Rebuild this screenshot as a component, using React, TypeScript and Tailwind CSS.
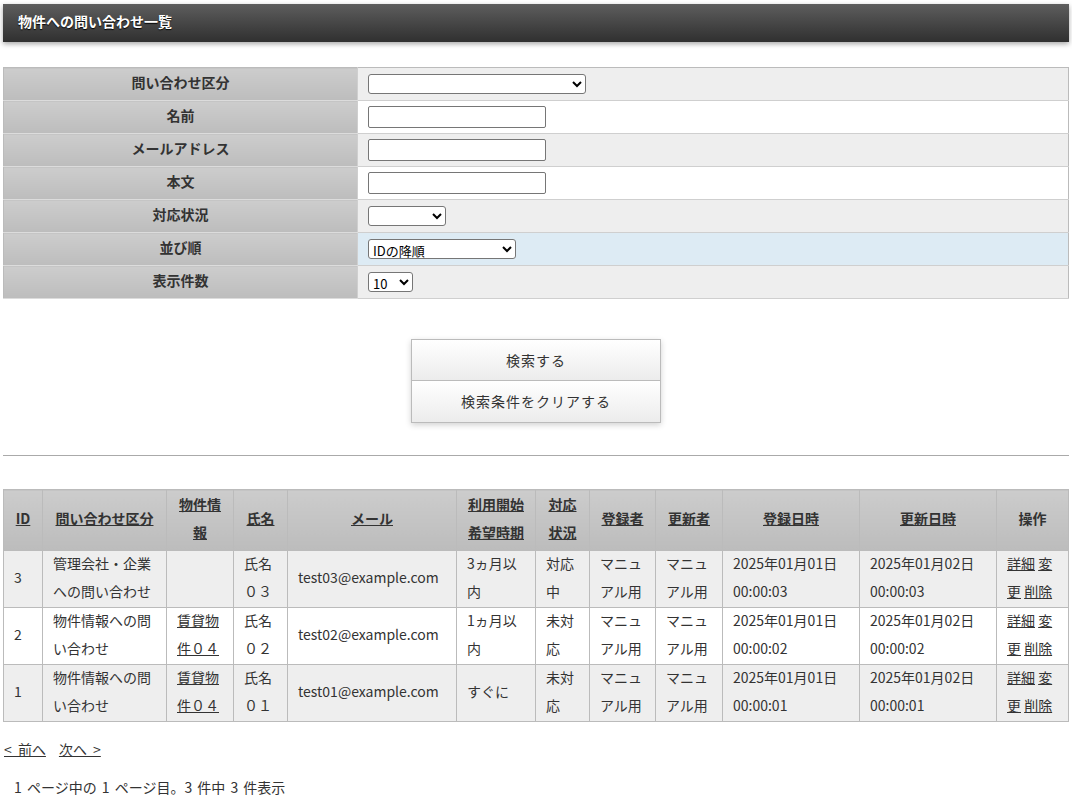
import React from "react";

const rows = [
  {
    id: "3",
    kind: "管理会社・企業への問い合わせ",
    prop: "",
    name: "氏名０３",
    mail: "test03@example.com",
    start: "3ヵ月以内",
    status: "対応中",
    created: "00:00:03",
    updated: "00:00:03",
  },
  {
    id: "2",
    kind: "物件情報への問い合わせ",
    prop: "賃貸物件０４",
    name: "氏名０２",
    mail: "test02@example.com",
    start: "1ヵ月以内",
    status: "未対応",
    created: "00:00:02",
    updated: "00:00:02",
  },
  {
    id: "1",
    kind: "物件情報への問い合わせ",
    prop: "賃貸物件０４",
    name: "氏名０１",
    mail: "test01@example.com",
    start: "すぐに",
    status: "未対応",
    created: "00:00:01",
    updated: "00:00:01",
  },
];

const labelCls =
  "w-[354px] h-[33px] pt-0 pb-[4px] bg-linear-to-b from-[#cdcdcd] to-[#bdbdbd] text-center font-bold border-b border-[#dcdcdc]";
const valueCls = "h-[33px] py-0 pl-[10px] border-b border-l border-[#cfcfcf]";
const inputCls = "block w-[178px] h-[22px] border border-[#767676] rounded-[2px] bg-white px-1";
const selectCls = "block h-[20px] border border-[#767676] rounded-[3px] bg-white text-[13px] text-black leading-none";

function FormRow({ label, bg, children }: { label: string; bg: string; children: React.ReactNode }) {
  return (
    <tr>
      <th className={labelCls}>{label}</th>
      <td className={`${valueCls} ${bg}`}>{children}</td>
    </tr>
  );
}

const thCls =
  "border border-[#bbb] bg-linear-to-b from-[#cccccc] to-[#bcbcbc] px-[10px] py-[2px] font-bold text-center leading-[28px]";
const tdCls = "border border-[#bbb] px-[10px] py-0 leading-[28px] align-middle";

// text sits a bit high in the original font, nudge it up by 2px
function Lift({ children }: { children: React.ReactNode }) {
  return <div className="-mt-[2px] mb-[2px]">{children}</div>;
}

export default function App() {
  return (
    <div className="min-h-screen bg-white px-[3px] pt-[4px] pb-4 text-[14px] text-[#333] font-['Noto_Sans_CJK_JP',sans-serif]">
      <h1 className="h-[38px] flex items-center px-[15px] pb-[4px] bg-linear-to-b from-[#5e5e5e] to-[#303030] text-white font-bold text-[14px] shadow-[0_2px_5px_rgba(0,0,0,0.35)] [text-shadow:0_1px_1px_#000]">
        物件への問い合わせ一覧
      </h1>

      <table className="mt-[25px] w-full border-collapse border border-[#bbb]">
        <tbody>
          <FormRow label="問い合わせ区分" bg="bg-[#eeeeee]">
            <select className={`${selectCls} w-[218px]`}>
              <option></option>
            </select>
          </FormRow>
          <FormRow label="名前" bg="bg-white">
            <input className={inputCls} />
          </FormRow>
          <FormRow label="メールアドレス" bg="bg-[#eeeeee]">
            <input className={inputCls} />
          </FormRow>
          <FormRow label="本文" bg="bg-white">
            <input className={inputCls} />
          </FormRow>
          <FormRow label="対応状況" bg="bg-[#eeeeee]">
            <select className={`${selectCls} w-[78px]`}>
              <option></option>
            </select>
          </FormRow>
          <FormRow label="並び順" bg="bg-[#ddebf4]">
            <select className={`${selectCls} w-[148px]`}>
              <option>IDの降順</option>
            </select>
          </FormRow>
          <FormRow label="表示件数" bg="bg-[#eeeeee]">
            <select className={`${selectCls} w-[45px]`}>
              <option>10</option>
            </select>
          </FormRow>
        </tbody>
      </table>

      <div className="mt-[40px] flex justify-center">
        <div className="w-[250px] border border-[#bbb] shadow-[0_2px_6px_rgba(0,0,0,0.18)]">
          <button className="block w-full h-[41px] border-b border-[#bbb] bg-linear-to-b from-white to-[#ececec] tracking-[1px] text-[#333]">
            検索する
          </button>
          <button className="block w-full h-[41px] bg-linear-to-b from-white to-[#ececec] tracking-[1px] text-[#333]">
            検索条件をクリアする
          </button>
        </div>
      </div>

      <hr className="mt-[32px] border-0 border-t border-[#aaa]" />

      <table className="mt-[33px] w-full table-fixed border-collapse border border-[#bbb]">
        <colgroup>
          <col className="w-[39px]" />
          <col className="w-[124px]" />
          <col className="w-[67px]" />
          <col className="w-[54px]" />
          <col className="w-[169px]" />
          <col className="w-[79px]" />
          <col className="w-[54px]" />
          <col className="w-[66px]" />
          <col className="w-[67px]" />
          <col className="w-[137px]" />
          <col className="w-[137px]" />
          <col className="w-[72px]" />
        </colgroup>
        <thead>
          <tr>
            {["ID", "問い合わせ区分", "物件情報", "氏名", "メール", "利用開始希望時期", "対応状況", "登録者", "更新者", "登録日時", "更新日時"].map(
              (h) => (
                <th key={h} className={thCls}>
                  <Lift>
                    <a href="#" className="underline">
                      {h}
                    </a>
                  </Lift>
                </th>
              )
            )}
            <th className={thCls}>
              <Lift>操作</Lift>
            </th>
          </tr>
        </thead>
        <tbody>
          {rows.map((r, i) => (
            <tr key={r.id} className={i % 2 === 1 ? "bg-white" : "bg-[#eeeeee]"}>
              <td className={tdCls}><Lift>{r.id}</Lift></td>
              <td className={tdCls}><Lift>{r.kind}</Lift></td>
              <td className={tdCls}>
                <Lift>
                  {r.prop && (
                    <a href="#" className="underline">
                      {r.prop}
                    </a>
                  )}
                </Lift>
              </td>
              <td className={tdCls}><Lift>{r.name}</Lift></td>
              <td className={tdCls}><Lift>{r.mail}</Lift></td>
              <td className={tdCls}><Lift>{r.start}</Lift></td>
              <td className={tdCls}><Lift>{r.status}</Lift></td>
              <td className={tdCls}><Lift>マニュアル用</Lift></td>
              <td className={tdCls}><Lift>マニュアル用</Lift></td>
              <td className={tdCls}><Lift>2025年01月01日 {r.created}</Lift></td>
              <td className={tdCls}><Lift>2025年01月02日 {r.updated}</Lift></td>
              <td className={tdCls}>
                <Lift>
                  <a href="#" className="underline">詳細</a>{" "}
                  <a href="#" className="underline">変更</a>{" "}
                  <a href="#" className="underline">削除</a>
                </Lift>
              </td>
            </tr>
          ))}
        </tbody>
      </table>

      <div className="mt-[17px] flex gap-[13px] pl-[1px] [word-spacing:3px]">
        <a href="#" className="underline">&lt; 前へ</a>
        <a href="#" className="underline">次へ &gt;</a>
      </div>
      <p className="mt-[17px] pl-[11px] [word-spacing:2px]">1 ページ中の 1 ページ目。3 件中 3 件表示</p>
    </div>
  );
}
